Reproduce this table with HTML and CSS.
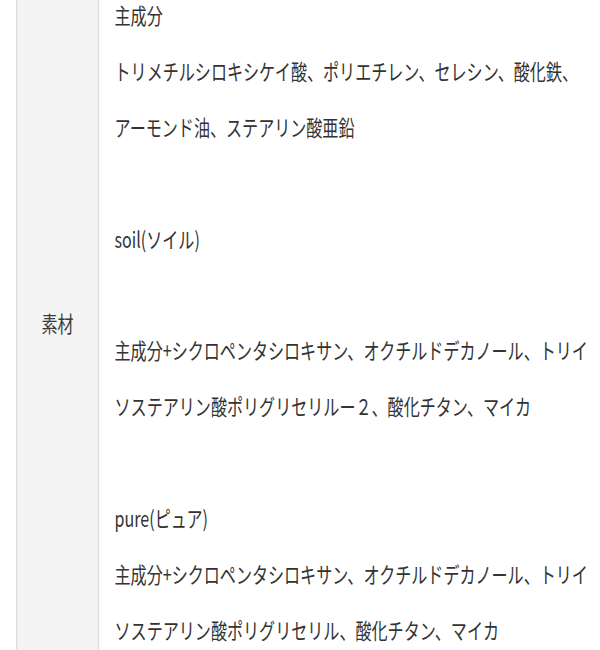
FILE: index.html
```html
<!DOCTYPE html>
<html lang="ja">
<head>
<meta charset="utf-8">
<title>素材</title>
<link rel="stylesheet" href="styles.css">
</head>
<body>
<div class="spec">
  <table class="spec-table">
    <tr>
      <th class="spec-head">素材</th>
      <td class="spec-body">主成分<br>トリメチルシロキシケイ酸、ポリエチレン、セレシン、酸化鉄、<br>アーモンド油、ステアリン酸亜鉛<br><br>soil(ソイル)<br><br>主成分+シクロペンタシロキサン、オクチルドデカノール、トリイ<br>ソステアリン酸ポリグリセリルー２、酸化チタン、マイカ<br><br>pure(ピュア)<br>主成分+シクロペンタシロキサン、オクチルドデカノール、トリイ<br>ソステアリン酸ポリグリセリル、酸化チタン、マイカ</td>
    </tr>
  </table>
</div>
</body>
</html>
```
FILE: styles.css
```css
html, body {
  margin: 0;
  padding: 0;
  background: #ffffff;
  overflow: hidden;
}
body {
  font-family: "Noto Sans CJK JP", "Noto Sans", sans-serif;
  color: #333333;
}
.spec {
  margin: -23px 0 0 16px;
  width: max-content;
  transform: scaleX(0.73);
  transform-origin: 0 0;
}
.spec-table {
  border-collapse: collapse;
}
.spec-head {
  width: 110px;
  min-width: 110px;
  padding: 0;
  background: #f4f4f4;
  border: 2px solid #dedede;
  font-weight: normal;
  font-size: 22px;
  text-align: center;
  vertical-align: middle;
  color: #3a3a3a;
}
.spec-body {
  padding: 8px 0 8px 21px;
  border: 2px solid #dedede;
  border-right: none;
  font-size: 22px;
  line-height: 55.9px;
  white-space: nowrap;
  vertical-align: top;
}
```
